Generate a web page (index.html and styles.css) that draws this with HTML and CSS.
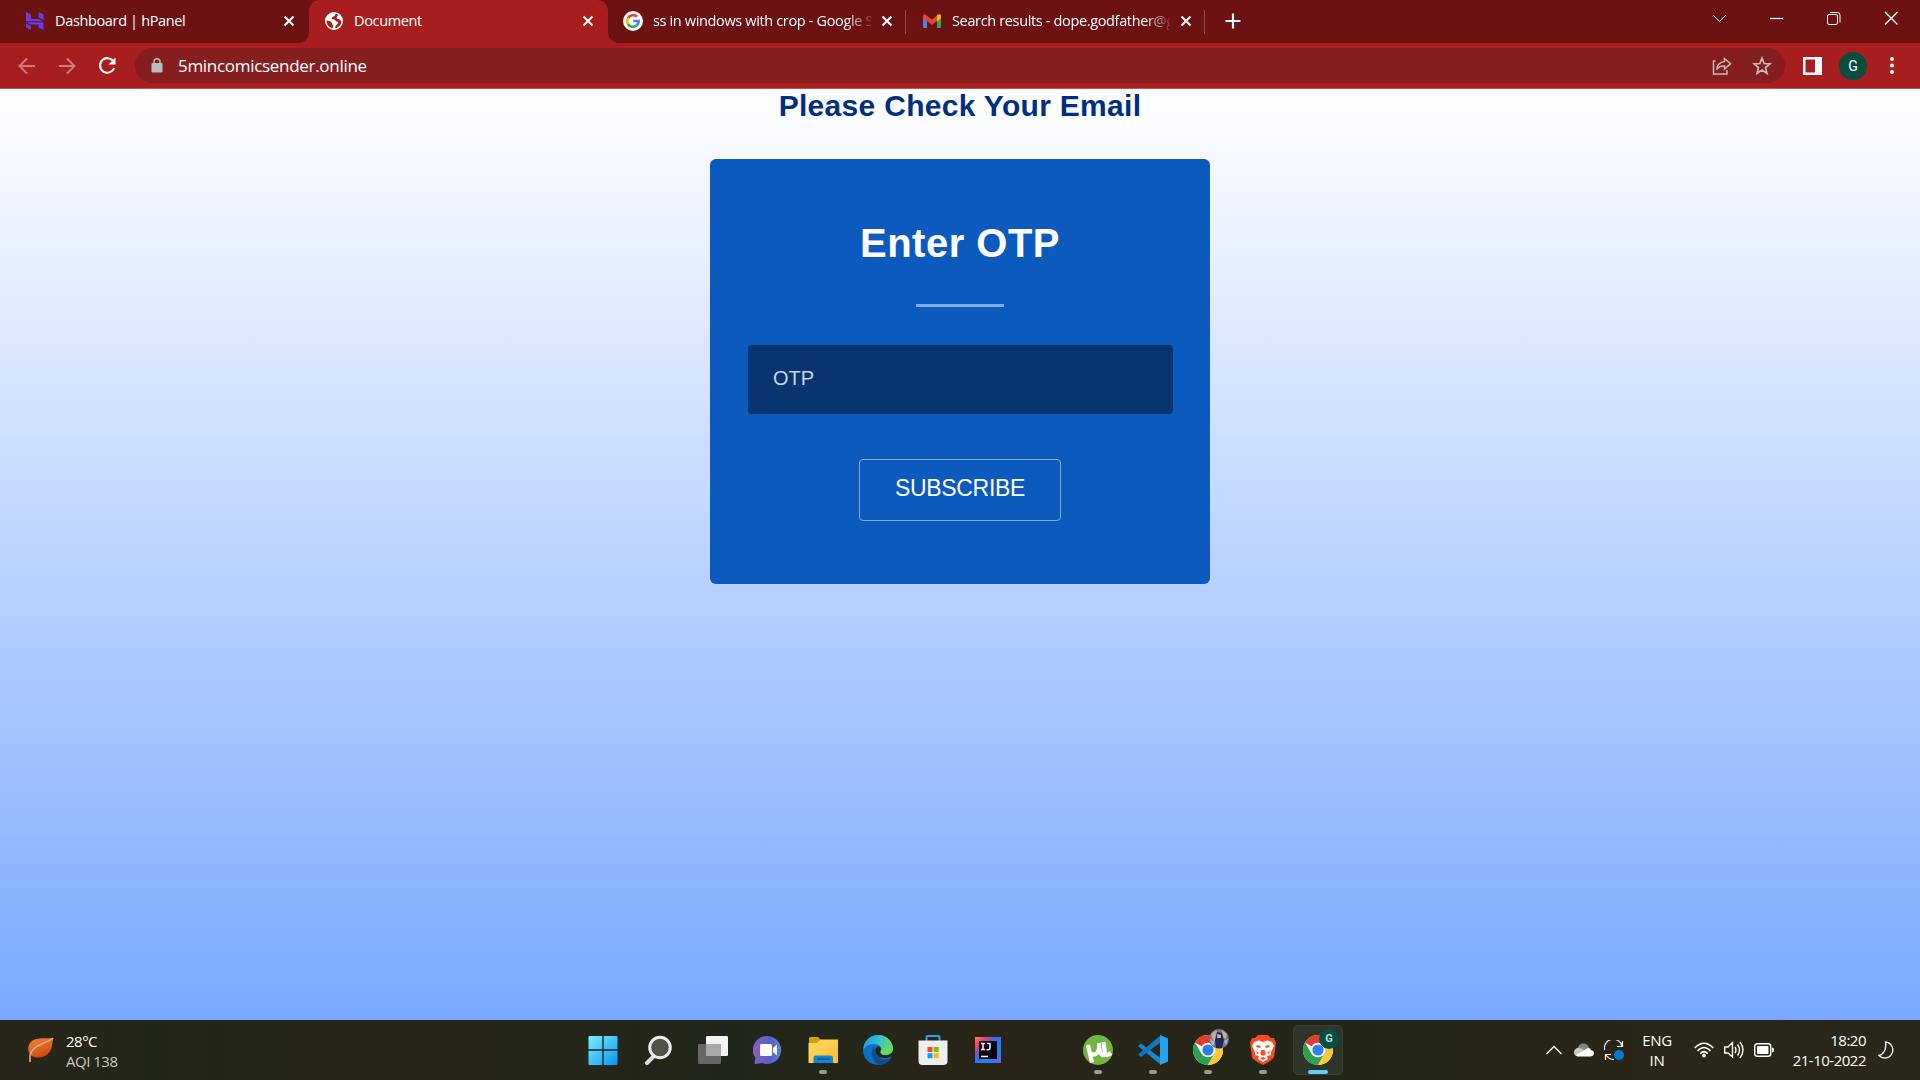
FILE: index.html
```html
<!DOCTYPE html>
<html lang="en">
<head>
<meta charset="utf-8">
<title>Document</title>
<link rel="stylesheet" href="styles.css">
</head>
<body>
<svg class="defs" width="0" height="0" aria-hidden="true">
  <defs>
    <symbol id="close" viewBox="0 0 12 12"><path d="M1.5 1.5 10.500 10.500M10.500 1.500 1.500 10.500" stroke="#fff" stroke-width="2" fill="none"/></symbol>
    <symbol id="chrome" viewBox="0 0 30 30">
      <circle cx="15" cy="15" r="15" fill="#fff"/>
      <path d="M15 15 2 7.500A15 15 0 0 1 28 7.500L28 8.500H15Z" fill="#e33b2e"/>
      <path d="M2 7.500A15 15 0 0 0 15 30L21.500 18.700 15 15 8.500 18.700Z" fill="#2ca24c"/>
      <path d="M28 7.500A15 15 0 0 1 15 30L21.500 18.700 15 8.200H28Z" fill="#fcc934"/>
      <circle cx="15" cy="15" r="7.300" fill="#fff"/>
      <circle cx="15" cy="15" r="5.600" fill="#2f7de9"/>
    </symbol>
  </defs>
</svg>
<div class="screen">
  <header class="tabstrip">
    <div class="tab tab-first">
      <svg class="fav" width="18" height="18" viewBox="0 0 18 18" fill="#673de6"><path d="M0 0 5 2.700V7H12.500L17 9.300H0ZM12.500 0 17.500 2.500V8L12.500 5.500ZM0 10.300H17.500V18L12.500 15.500V12.500H4.500ZM0 11.500 5 14V18L0 15.500Z"/></svg>
      <span class="tab-title t-dash">Dashboard | hPanel</span>
      <svg class="x" width="12" height="12"><use href="#close"/></svg>
    </div>
    <div class="tab tab-active">
      <svg class="fav" width="18" height="18" viewBox="0 0 18 18"><circle cx="9" cy="9" r="9" fill="#fff"/><path d="M10.500 1.500C10 3 10.500 4 8.500 4.500 7 5 7.500 6 6.500 6.500 7 8 9 7 10 8S10.500 9.500 12 9.500 13.500 11 12 12.500 10.500 14 10 16.300C13.500 15.700 16.300 12.800 16.400 9 15 8.800 14.800 7 13.500 7S11 6.500 12 4.800 13 3.500 13.300 3ZM1.700 8.500C3.500 8.500 6.500 9.500 6.800 11S8 12.500 8 14 7.500 15.500 7.500 16.300C3.800 15.500 1.500 12 1.700 8.500Z" fill="#a81d1d"/></svg>
      <span class="tab-title t-doc">Document</span>
      <svg class="x" width="12" height="12"><use href="#close"/></svg>
    </div>
    <div class="tab tab-sep">
      <svg class="fav fav-g" width="20" height="20" viewBox="0 0 20 20" fill="none" stroke-width="2.700"><circle cx="10" cy="10" r="10" fill="#fff"/><path d="M14 5.800A5.800 5.800 0 0 0 4.900 7.200" stroke="#ea4335"/><path d="M4.900 7.200A6 6 0 0 0 4.900 12.800" stroke="#fbbc05"/><path d="M4.900 12.800A5.800 5.800 0 0 0 13.500 14.600" stroke="#34a853"/><path d="M10.200 10H15.700C15.700 12 15 13.500 13.500 14.600" stroke="#4285f4"/></svg>
      <span class="tab-title fade t-ss">ss in windows with crop - Google Search</span>
      <svg class="x" width="12" height="12"><use href="#close"/></svg>
    </div>
    <div class="tab tab-sep">
      <svg class="fav" width="18" height="14" viewBox="0 0 18 14"><path d="M0 2V13Q0 14 1 14H4V5Z" fill="#4285f4"/><path d="M18 2V13Q18 14 17 14H14V5Z" fill="#34a853"/><path d="M14 1 16 .2Q18 0 18 2V4L14 7.500Z" fill="#fbbc04"/><path d="M0 2Q0 0 2 .2L9 5.500 14 1.500V7L9 11 4 7V7.500L0 4Z" fill="#ea4335"/></svg>
      <span class="tab-title fade t-mail">Search results - dope.godfather@gmail.com</span>
      <svg class="x" width="12" height="12"><use href="#close"/></svg>
    </div>
    <svg class="plus" width="16" height="16" viewBox="0 0 16 16"><path d="M8 .5V15.500M.5 8H15.500" stroke="#fff" stroke-width="2.200"/></svg>
    <div class="winctl">
      <svg width="57" height="36" viewBox="0 0 57 36"><path d="m22 15 6.500 6.500L35 15"/></svg>
      <svg width="57" height="36" viewBox="0 0 57 36"><path d="M22 18.500H35" stroke-width="1.300"/></svg>
      <svg width="57" height="36" viewBox="0 0 57 36"><rect x="22.500" y="14.500" width="10" height="10" rx="1.500"/><path d="M25 12.500H32.500Q35 12.500 35 15V22.500"/></svg>
      <svg width="58" height="36" viewBox="0 0 58 36"><path d="m23 12 12.500 12.500M35.500 12 23 24.500" stroke-width="1.300"/></svg>
    </div>
  </header>

  <nav class="toolbar">
    <svg class="nav" width="40" height="36" viewBox="0 0 40 36"><path d="M28 18H13M20 10.500 12.500 18 20 25.500" stroke="#d07d7d" stroke-width="1.800" fill="none"/></svg>
    <svg class="nav" width="40" height="36" viewBox="0 0 40 36"><path d="M12 18H27M20 10.500 27.500 18 20 25.500" stroke="#d07d7d" stroke-width="1.800" fill="none"/></svg>
    <svg class="nav" width="40" height="36" viewBox="0 0 40 36"><path d="M26.500 13.500A7.300 7.300 0 1 0 27.200 20" stroke="#fff" stroke-width="2.100" fill="none"/><path d="M28.500 9.500V16.500H21.500Z" fill="#fff"/></svg>
    <div class="omnibox">
      <svg width="12" height="15" viewBox="0 0 12 15"><rect x=".5" y="5" width="11" height="9.500" rx="1.300" fill="#b7bcc0"/><path d="M3 6V3.800a3 3 0 0 1 6 0V6" stroke="#b7bcc0" stroke-width="1.500" fill="none"/></svg>
      <span class="url">5mincomicsender.online</span>
      <svg class="share" width="20" height="20" viewBox="0 0 20 20" fill="none" stroke="#cbb5b5" stroke-width="1.500"><path d="M3.500 5H1.500V18H15V14"/><path d="M12.500 2.500 18.500 7.700 12.500 13V10Q7.500 9.500 4.700 13.500 5.500 6.500 12.500 5.500Z"/></svg>
      <svg class="star" width="20" height="20" viewBox="0 0 20 20"><path d="m10 2 2.100 5.500 5.900.4-4.500 3.700 1.500 5.700-5-3.200-5 3.200 1.500-5.700L2 7.900l5.900-.4Z" fill="none" stroke="#c8b9b9" stroke-width="1.700"/></svg>
    </div>
    <svg class="panel" width="19" height="18" viewBox="0 0 19 18"><path d="M0 0H19V18H0ZM2.500 2.500V15.500H12V2.500Z" fill="#fff" fill-rule="evenodd"/></svg>
    <div class="avatar">G</div>
    <svg class="dots" width="4" height="17" viewBox="0 0 4 17" fill="#fff"><circle cx="2" cy="2" r="2"/><circle cx="2" cy="8.500" r="2"/><circle cx="2" cy="15" r="2"/></svg>
  </nav>

  <main class="page">
    <h2 class="notice">Please Check Your Email</h2>
    <form class="card">
      <h1 class="card-title">Enter OTP</h1>
      <div class="rule"></div>
      <input class="otp" type="text" placeholder="OTP">
      <button class="subscribe" type="button">SUBSCRIBE</button>
    </form>
  </main>

  <footer class="taskbar">
    <div class="weather">
      <svg width="26" height="26" viewBox="0 0 26 26"><defs><linearGradient id="leaf" x1="0" y1="0" x2=".5" y2="1"><stop offset="0" stop-color="#f08a3c"/><stop offset="1" stop-color="#cd4a0c"/></linearGradient></defs><path d="M25.500 1C18 2 7-1 2 6-1 11 0 15 3 18.500 9 22 17 21 21.500 15 25 10 24 5 25.500 1Z" fill="url(#leaf)"/><path d="M25 1C19 7 5 7 2 18V25" stroke="#f0a679" stroke-width="1.600" fill="none"/></svg>
      <div class="weather-text"><div>28°C</div><div class="dim">AQI 138</div></div>
    </div>
    <div class="apps">
      <div class="app"><svg width="30" height="30" viewBox="0 0 30 30"><defs><linearGradient id="win" x1="0" y1="0" x2="1" y2="1"><stop offset="0" stop-color="#7af0ff"/><stop offset="1" stop-color="#0a93f5"/></linearGradient></defs><path d="M.5 2Q.5 1 1.500 1H14.300V14.300H.5ZM15.700 1H28.500Q29.500 1 29.500 2V14.300H15.700ZM.5 15.700H14.300V30H1.500Q.5 30 .5 29ZM15.700 15.700H29.500V29Q29.500 30 28.500 30H15.700Z" fill="url(#win)"/></svg></div>
      <div class="app"><svg width="30" height="30" viewBox="0 0 30 30"><path d="M11 21 4 28" stroke="#d9dcde" stroke-width="4" stroke-linecap="round"/><circle cx="17" cy="12.500" r="10.300" fill="#50534a" stroke="#eceeef" stroke-width="3"/></svg></div>
      <div class="app"><svg width="30" height="30" viewBox="0 0 30 30"><rect x="8" y="1" width="22" height="20" rx="1.200" fill="#f2f2f2"/><rect x="0" y="9" width="23" height="20" rx="1.200" fill="#666"/><path d="M8 9H23V21H8Z" fill="#a8a8a8"/></svg></div>
      <div class="app"><svg width="30" height="30" viewBox="0 0 30 30"><defs><linearGradient id="chat" x1="0" y1="0" x2="1" y2="0"><stop offset="0" stop-color="#8c5fb8"/><stop offset=".6" stop-color="#5a5ecb"/><stop offset="1" stop-color="#4f86d8"/></linearGradient></defs><path d="M15 1A14 14 0 1 1 9 28L2 29Q1 28.500 2.500 23A14 14 0 0 1 15 1Z" fill="url(#chat)"/><rect x="7" y="9" width="12" height="12" rx="1.500" fill="#fff"/><path d="m20 13 4-3.500V20.500L20 17Z" fill="#fff"/></svg></div>
      <div class="app"><svg width="30" height="30" viewBox="0 0 30 30"><defs><linearGradient id="fold" x1="0" y1="0" x2="1" y2="1"><stop offset="0" stop-color="#ffdc68"/><stop offset="1" stop-color="#fdbd2c"/></linearGradient></defs><path d="M1 3.500Q1 2 2.500 2H10L13 5H28Q29 5 29.500 7V12H1Z" fill="#dc9c09"/><path d="M.5 8H9L12.500 4.500H30V28H.5Z" fill="url(#fold)"/><path d="M5.500 28V23Q5.500 20.500 8 20.500H22.500Q25 20.500 25 23V28Z" fill="#1185d4"/><path d="M9 24H22" stroke="#075b9c" stroke-width="1.500"/></svg><i class="ind"></i></div>
      <div class="app"><svg width="30" height="30" viewBox="0 0 30 30"><defs><linearGradient id="edge" x1="0" y1=".3" x2="1" y2=".5"><stop offset="0" stop-color="#1b9de2"/><stop offset=".5" stop-color="#35c1cd"/><stop offset="1" stop-color="#67df5d"/></linearGradient></defs><circle cx="15" cy="15" r="15" fill="#0c70c4"/><path d="M.5 12C3 3 9 0 15 0 24 0 30 7 30 13 30 18 26 20 22 20 18 20 16.500 18 18 16 20 12 15 8.500 10.500 9 5 9 1 12 .5 16Z" fill="url(#edge)"/><path d="M11 12C7 17 8 26 16 30 22 30 26 27 28 23 21 27 12 23 11 12Z" fill="#104e91"/><path d="M15 11.500C11.500 13 11.500 17 14 20 18 24 24 23.500 28.500 21.500L30 22V15C29 19 25 20.500 21 20 17 19.500 17 17 18 15.500 18.500 13 17 11 15 11.500Z" fill="#26251a"/><path d="M18 15C17 17 18 20 22 20 27 20 30 17.500 30 13L27 10Z" fill="#62dc60"/></svg></div>
      <div class="app"><svg width="30" height="30" viewBox="0 0 30 30"><path d="M8.500 7V2Q8.500 1 9.500 1H20.500Q21.500 1 21.500 2V7" stroke="#28a8ea" stroke-width="2" fill="none"/><path d="M.5 5.500H29.500V26Q29.500 30 25.500 30H4.500Q.5 30 .5 26Z" fill="#eee"/><path d="M9.500 12H14.500V17H9.500Z" fill="#f25022"/><path d="M15.700 12H20.700V17H15.700Z" fill="#7fba00"/><path d="M9.500 18.200H14.500V23.200H9.500Z" fill="#00a4ef"/><path d="M15.700 18.200H20.700V23.200H15.700Z" fill="#ffb900"/></svg></div>
      <div class="app"><svg width="26" height="26" viewBox="0 0 26 26"><defs><linearGradient id="ij" x1="0" y1="0" x2="1" y2="1"><stop offset="0" stop-color="#fd8b3a"/><stop offset=".2" stop-color="#f43b72"/><stop offset=".42" stop-color="#2f70ed"/><stop offset=".75" stop-color="#1489f5"/><stop offset="1" stop-color="#8157dd"/></linearGradient></defs><rect width="26" height="26" fill="url(#ij)"/><rect x="4" y="4" width="18" height="18" fill="#0c020b"/><path d="M6 6.500H10M8 6.500V12.500M6 12.500H10M12 6.500H15V11Q15 12.700 13.500 12.700H11.500M6 19.500H13" stroke="#fff" stroke-width="1.500" fill="none"/></svg></div>
      <div class="app"></div>
      <div class="app"><svg width="30" height="30" viewBox="0 0 30 30"><circle cx="15" cy="15" r="15" fill="#73b543"/><path d="M5 10 9 27.500M7.500 19Q17 22 16 8M16 10C17 23 22 21 22 18L20.500 7M22 18Q23 22 28 18" stroke="#fff" stroke-width="4.200" fill="none"/></svg><i class="ind"></i></div>
      <div class="app"><svg width="30" height="30" viewBox="0 0 30 30"><path d="M0 11 3 8.500 23 23.500V30L0 11Z" fill="#1688d0"/><path d="M0 19.500 3 22 23 7V0Z" fill="#0c78bd"/><path d="M22 0 30 3.500V26.500L22 30Z" fill="#26a2ef"/></svg><i class="ind"></i></div>
      <div class="app"><svg width="30" height="30"><use href="#chrome"/></svg><svg class="badge" width="20" height="20" viewBox="0 0 20 20"><circle cx="10" cy="10" r="10" fill="#77788a"/><path d="M2 5 7 1 9 5 5 14ZM13 1 18 5 17 10 13 8Z" fill="#c7a997"/><path d="m8 3 5 1 2 7-2 8H7L6 11Z" fill="#202750"/><path d="m8 5 4 1v3H8ZM1 10l4 3v3H3ZM15 12l4-2-2 6Z" fill="#aeb8cf"/></svg><i class="ind"></i></div>
      <div class="app"><svg width="26" height="30" viewBox="0 0 26 30"><path d="M8 0H18L21 3 24 3 26 8 24 22Q23 25 13 30 3 25 2 22L0 8 2 3H5Z" fill="#f94b20"/><path d="M4 7 9 5.500 13 7 17 5.500 22 7 24 11 21 17 21 20 17 21 18 24 13 27 8 24 9 21 5 20 5 17 2 11Z" fill="#fff"/><path d="M7 10 11 11 10 13 6 12ZM19 10 15 11 16 13 20 12ZM11.500 15H14.500L16 19 13 21 10 19ZM6 16 9 18 7 19ZM20 16 17 18 19 19ZM10 23 13 22 16 23 13 25Z" fill="#f94b20"/></svg><i class="ind"></i></div>
      <div class="app app-on"><svg width="30" height="30"><use href="#chrome"/></svg><span class="badge badge-g">G</span><i class="ind ind-on"></i></div>
    </div>
    <div class="tray">
      <svg class="t-up" width="16" height="16" viewBox="0 0 16 16"><path d="M.5 12 8 4.500 15.500 12" stroke="#f3f3ef" stroke-width="1.400" fill="none"/></svg>
      <svg class="t-cloud" width="20" height="14" viewBox="0 0 20 14"><path d="M4 8A5.500 5.500 0 0 1 15 4.500L17 9H4Z" fill="#87867e"/><path d="M0 9.500A4.500 4.500 0 0 1 6 5L14 9 4 13.500Q0 13 0 9.500Z" fill="#c9c9c4"/><path d="M2 12 13 5.500Q16 4 17 7 20 8 20 10.500 19.500 13.500 16 13.500H4Z" fill="#fff"/></svg>
      <svg class="t-sync" width="20" height="20" viewBox="0 0 20 20"><path d="M.7 10A8.500 8.500 0 0 1 18 6M18.500 1V6.500H13M1.500 20V14.500H7M2 15Q5 19.500 10 19.500" stroke="#eee" stroke-width="1.200" fill="none"/><circle cx="15" cy="15" r="5" fill="#0779d9"/></svg>
      <div class="lang"><div>ENG</div><div>IN</div></div>
      <svg class="t-wifi" width="20" height="16" viewBox="0 0 20 16"><path d="M.7 6Q10-3.500 19.300 6M3.500 9Q10 2 16.500 9M6.300 11.800Q10 7.500 13.700 11.800" stroke="#fff" stroke-width="1.600" fill="none"/><circle cx="10" cy="13.500" r="1.900" fill="#fff"/></svg>
      <svg class="t-vol" width="20" height="18" viewBox="0 0 20 18"><path d="M.7 6H4L8.500 1.500V16L4 12H.7ZM11 6Q13 9 11 12M13.500 3.500Q17.500 9 13.500 14.500M16 1Q22 9 16 17" stroke="#fff" stroke-width="1.400" fill="none"/></svg>
      <svg class="t-bat" width="20" height="14" viewBox="0 0 20 14"><rect x=".7" y=".7" width="16" height="12.600" rx="2.500" stroke="#fff" stroke-width="1.400" fill="none"/><rect x="3" y="3" width="11.500" height="8" rx="1" fill="#fff"/><path d="M18 4.500 20 5.500V8.500L18 9.500Z" fill="#fff"/></svg>
      <div class="clock"><div>18:20</div><div>21-10-2022</div></div>
      <svg class="t-moon" width="17" height="18" viewBox="0 0 17 18"><path d="M7.500 1A8 8 0 1 1 1 14.500Q9 12 7.500 1Z" stroke="#eee" stroke-width="1.400" fill="none"/></svg>
    </div>
  </footer>
</div>
</body>
</html>
```
FILE: styles.css
```css
* { box-sizing: border-box; }
body { margin: 0; font-family: "Open Sans", "Noto Sans", sans-serif; }
svg { display: block; flex: none; }
.defs { position: absolute; }
.screen { width: 1920px; height: 1080px; display: flex; flex-direction: column; overflow: hidden; }

.tabstrip { height: 43px; background: #6c1213; display: flex; padding-left: 10px; }
.tab { width: 299px; height: 43px; display: flex; align-items: center; padding: 0 14px 2px 16px; color: #fff; font-size: 14.5px; }
.tab-active { background: #a81d1d; border-radius: 10px 10px 0 0; position: relative; }
.tab-active::before, .tab-active::after { content: ""; position: absolute; bottom: 0; width: 10px; height: 10px; }
.tab-active::before { left: -10px; background: radial-gradient(circle at 0 0, transparent 9.500px, #a81d1d 10px); }
.tab-active::after { right: -10px; background: radial-gradient(circle at 100% 0, transparent 9.500px, #a81d1d 10px); }
.tab-sep { background: linear-gradient(#8f4b4a, #8f4b4a) right 1px top 10px / 1px 24px no-repeat; }
.fav { margin-right: 11px; }
.fav-g { margin: 0 10px 0 -1px; }
.tab-title { flex: 1; white-space: nowrap; overflow: hidden; letter-spacing: -.35px; margin-right: 10px; }
.fade { -webkit-mask-image: linear-gradient(to right, #000 88%, transparent 102%); mask-image: linear-gradient(to right, #000 88%, transparent 102%); }
.plus { margin: 13px 0 0 19px; }
.winctl { margin-left: auto; display: flex; stroke: #fff; stroke-width: 1; fill: none; }

.toolbar { height: 46px; background: #a81d1d; border-bottom: 1px solid #bb5453; display: flex; align-items: center; padding-left: 7px; }
.omnibox { width: 1650px; height: 35px; margin-left: 8px; border-radius: 18px; background: #851e1f; display: flex; align-items: center; padding: 0 13px 0 16px; }
.url { color: #fff; font-size: 17px; margin-left: 15px; flex: 1; letter-spacing: -.3px; }
.share { margin-right: 20px; }
.panel { margin-left: 18px; }
.avatar { width: 28px; height: 28px; margin-left: 17px; border-radius: 50%; background: #054f41; color: #fff; font: 14px/28px Roboto, sans-serif; text-align: center; }
.dots { margin-left: 23px; }

.page { height: 931px; background: linear-gradient(#fff, #78a8ff); display: flex; flex-direction: column; align-items: center; font-family: "Liberation Sans", Arial, sans-serif; }
.notice { margin: 0; height: 70px; line-height: 34px; font-size: 30px; letter-spacing: .3px; color: #002f80; white-space: nowrap; }
.card { width: 500px; height: 425px; background: #0c5abe; border-radius: 6px; display: flex; flex-direction: column; align-items: center; }
.card-title { margin: 61px 0 0; font-size: 40px; line-height: 46px; letter-spacing: .5px; color: #fff; }
.rule { width: 88px; height: 3px; margin-top: 38px; background: #86abdf; }
.otp { width: 425px; height: 69px; margin-top: 38px; margin-left: 1px; padding: 0 25px 2px; border: 0; border-radius: 4px; background: #08356f; color: #fff; font: 20px "Liberation Sans", Arial, sans-serif; }
.otp::placeholder { color: #c9d3e0; opacity: 1; }
.subscribe { width: 202px; height: 62px; margin-top: 45px; padding: 0 0 3px; border: 1px solid #86abdf; border-radius: 4px; background: none; color: #fff; font: 23px "Liberation Sans", Arial, sans-serif; letter-spacing: -.3px; }

.taskbar { height: 60px; background: linear-gradient(90deg, #29251a, #212716 8%, #292518 20%, #20271a 38%, #292518 52%, #282519 60%, #212617 68%, #292617 80%, #2b2719); display: flex; color: #fff; font-size: 15px; line-height: 20px; }
.weather { width: 575px; display: flex; padding: 17px 0 0 28px; }
.weather-text { margin: -6px 0 0 12px; letter-spacing: -.5px; }
.dim { color: #c9c9c2; }
.apps { display: flex; }
.app { width: 55px; height: 60px; display: flex; align-items: center; justify-content: center; position: relative; }
.app-on::before { content: ""; position: absolute; inset: 5px 2px 5px 3px; border: 1px solid #3b3d30; border-radius: 5px; background: #30352a; }
.app-on > svg { position: relative; }
.ind { position: absolute; left: 23.500px; top: 50px; width: 8px; height: 4px; border-radius: 2px; background: #9a9b92; }
.ind-on { left: 18px; width: 20px; background: #60cdff; }
.badge { position: absolute; left: 29px; top: 9px; }
.badge-g { width: 20px; height: 20px; border-radius: 50%; background: #054f45; color: #c8d8d5; font: bold 11px/20px Roboto, sans-serif; text-align: center; }
.tray { width: 575px; display: flex; align-items: center; padding-left: 201px; }
.t-cloud { margin-left: 12px; }
.t-sync { margin-left: 10px; }
.lang { width: 40px; margin-left: 13px; text-align: center; letter-spacing: -.3px; }
.t-wifi { margin-left: 17px; }
.t-vol, .t-bat { margin-left: 10px; }
.clock { width: 92px; text-align: right; letter-spacing: -.5px; }
.t-moon { margin-left: 12px; }
```
